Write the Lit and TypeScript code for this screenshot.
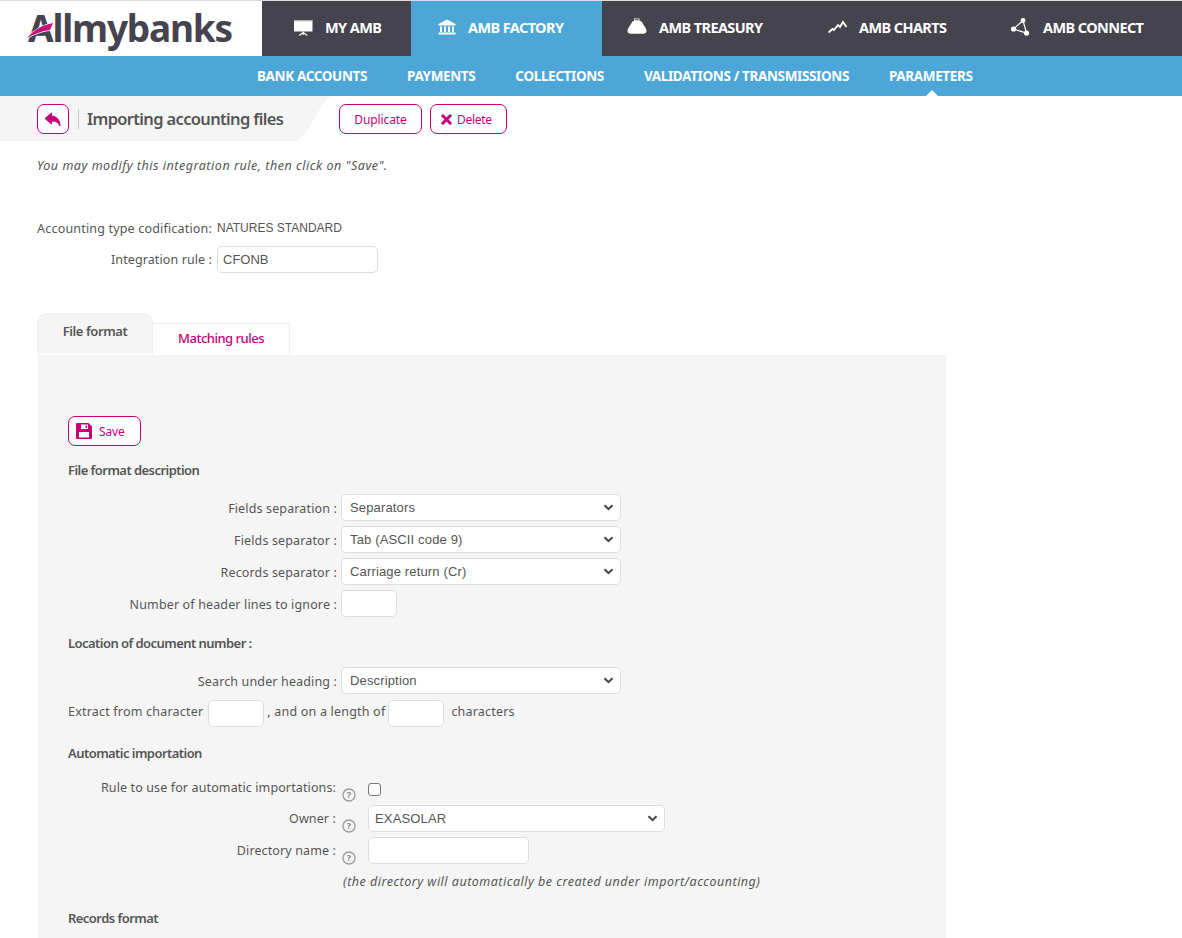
import { LitElement, html, css, svg } from "lit";
import { customElement } from "lit/decorators.js";

const selectCtl = (w: string, text: string) => html`<span class="selw ${w}"><select class="sel"><option>${text}</option></select><svg class="chev" width="11" height="7" viewBox="0 0 11 7"><path d="M1.500 1.200 5.500 5.200l4-4" fill="none" stroke="#444" stroke-width="2"/></svg></span>`;
const help = () => html`<svg class="help" width="14" height="14" viewBox="0 0 14 14"><circle cx="7" cy="7" r="6" fill="none" stroke="#999" stroke-width="1.300"/><text x="7" y="10.2" text-anchor="middle" font-size="9" font-weight="700" font-family="Noto Sans" fill="#888">?</text></svg>`;

const icons = {
  monitor: svg`<path d="M0 3.500h18.500v11H0z" fill="#fff"/><path d="M0 3.500h18.500v1H0z" fill="#cfc8b8"/><path d="M9.200 14.500v3.500M9.200 15.500l-4 3M9.200 15.500l4 3" stroke="#fff" stroke-width="1.100" fill="none"/>`,
  bank: svg`<path d="M9 2.500 .5 7v1.500h17V7z M2 9.500h2v5.500H2z M6 9.500h2v5.500H6z M10 9.500h2v5.500h-2z M14 9.500h2v5.500h-2z M.5 15.500h17v2H.5z" fill="#fff"/>`,
  purse: svg`<path d="M7 1.500h5.500V4H7z M7.800 2.300v1h3.900v-1z" fill="#fff" fill-rule="evenodd"/><path d="M6.500 4h7c1 0 1.500 1.200 2.500 3 1.500 2.500 3.500 4.500 3.500 7 0 1.800-1.500 2.700-3 2.700H3.500C2 16.700.5 15.800.5 14c0-2.500 2-4.500 3.500-7 1-1.800 1.500-3 2.500-3z" fill="#fff"/>`,
  chart: svg`<path d="M1.500 15.500 5.500 12l1.500 1 4-5 2 2 3-5 3.500 5" fill="none" stroke="#fff" stroke-width="1.800"/>`,
  connect: svg`<path d="M13.500 3.500 4 12l13 4z" fill="none" stroke="#fff" stroke-width="1.200"/><circle cx="13.500" cy="3.500" r="2.400" fill="#fff"/><circle cx="4" cy="12" r="2.600" fill="#fff"/><circle cx="17" cy="16" r="2.600" fill="#fff"/>`,
};

@customElement("app-root")
export class AppRoot extends LitElement {
  static styles = css`
    :host { display: block; width: 1182px; height: 938px; overflow: hidden; background: #fff; font-family: "Noto Sans", sans-serif; font-size: 12.5px; color: #555; }
    * { box-sizing: border-box; }
    .top { display: flex; height: 56px; border-top: 1px solid #ddd; background: #45434e; }
    .logo { width: 262px; background: #fff; position: relative; display: flex; align-items: center; padding: 0 0 2px 28px; font: 700 37px/1 "Noto Sans", sans-serif; letter-spacing: -1.2px; color: #45434e; }
    .swoosh { position: absolute; left: 26px; top: 14px; }
    .nav { display: flex; align-items: center; padding-bottom: 3px; color: #fff; font-weight: 700; font-size: 14.5px; letter-spacing: -0.6px; white-space: nowrap; }
    .nav svg { margin-right: 11px; flex: none; }
    .n1 { width: 149px; padding-left: 32px; }
    .n2 { width: 191px; padding-left: 27px; background: #4da6d8; }
    .n2 svg { margin-right: 10px; }
    .n3 { width: 191px; padding-left: 25px; }
    .n3 svg { margin-right: 12px; }
    .n4 { width: 184px; padding-left: 34px; }
    .n4 svg { margin-right: 12px; }
    .n5 { flex: 1; padding-left: 32px; }
    .n5 svg { margin-right: 13px; }
    .sub { height: 40px; background: #4da6d8; display: flex; gap: 40px; padding-left: 257px; align-items: center; color: #fff; font-weight: 700; font-size: 13.5px; letter-spacing: -0.36px; position: relative; white-space: nowrap; }
    .caret { position: absolute; left: 926px; bottom: 0; width: 0; height: 0; border: 6px solid transparent; border-top: 0; border-bottom: 6px solid #fff; }
    .crumbs { height: 45px; display: flex; align-items: flex-start; position: relative; }
    .crumb-bg { position: absolute; left: 0; top: 0; }
    .crumb-row { position: relative; display: flex; align-items: center; padding: 8px 0 0 37px; }
    .btn { height: 30px; border: 1px solid #c5007a; border-radius: 7px; background: #fff; color: #c5007a; display: inline-flex; align-items: center; justify-content: center; font-size: 12px; letter-spacing: -0.1px; }
    .back { width: 32px; }
    .vr { width: 1px; height: 20px; background: #ccc; margin: 0 8px 0 9px; }
    .title { width: 252px; padding-bottom: 2px; font-size: 16.5px; font-weight: 600; letter-spacing: -0.66px; color: #555; }
    .dup { width: 83px; margin-right: 8px; }
    .del { width: 77px; gap: 5px; justify-content: flex-start; padding-left: 10px; letter-spacing: -0.3px; }
    .note { margin: 16px 0 0 37px; font-style: italic; font-size: 12.5px; letter-spacing: 0.53px; line-height: 17px; }
    .row1 { display: flex; margin-top: 47px; padding-left: 37px; line-height: 16px; align-items: center; }
    .row1 .l { width: 175px; text-align: right; letter-spacing: 0.18px; white-space: nowrap; }
    .row1 .v { margin-left: 5px; font: 12px "Liberation Sans", sans-serif; color: #555; margin-top: -2px; }
    .row2 { display: flex; margin-top: 9px; padding-left: 37px; align-items: center; }
    .row2 .l { width: 175px; text-align: right; letter-spacing: 0.1px; }
    .row2 .inp { margin-left: 5px; width: 161px; color: #555; padding-left: 5px; }
    .inp { height: 27px; border: 1px solid #ddd; border-radius: 5px; background: #fff; font: 13px "Liberation Sans", sans-serif; display: block; }
    .tabs { display: flex; align-items: flex-end; margin: 40px 0 0 37px; height: 41px; }
    .tab-a { width: 116px; height: 41px; background: #f5f5f5; border: 1px solid #eee; border-bottom: 0; border-radius: 10px 10px 0 0; font-weight: 600; font-size: 13px; letter-spacing: -0.42px; text-align: center; padding-top: 8px; color: #555; }
    .tab-b { width: 137px; height: 31px; border: 1px solid #eee; border-left: 0; border-bottom: 0; color: #c5007a; font-size: 13px; font-weight: 500; letter-spacing: -0.5px; text-align: center; padding-top: 5px; }
    .panel { margin: 1px 0 0 38px; width: 908px; height: 600px; background: #f5f5f5; padding: 61px 0 0 30px; }
    .save { width: 73px; gap: 7px; justify-content: flex-start; padding-left: 7px; }
    h3 { margin: 0; font-size: 13px; font-weight: 600; letter-spacing: -0.55px; line-height: 18px; color: #555; }
    .h1 { margin-top: 15px; }
    .rows { display: grid; grid-template-columns: 269px auto; justify-content: start; row-gap: 5px; align-items: center; column-gap: 4px; }
    .rows .l { padding-top: 2px; text-align: right; letter-spacing: 0.14px; white-space: nowrap; }
    .r-a { margin-top: 15px; }
    .h2 { margin-top: 17px; }
    .r-b { margin-top: 15px; }
    .selw { position: relative; display: block; }
    .chev { position: absolute; right: 7px; top: 10px; pointer-events: none; }
    .sel { appearance: none; width: 100%; height: 27px; border: 1px solid #ddd; border-radius: 5px; background: #fff; color: #555; font: 13px "Liberation Sans", sans-serif; letter-spacing: 0.15px; padding: 0 8px; display: block; }
    .w280 { width: 280px; }
    .w297 { width: 297px; }
    .w297 .sel { padding: 0 6px; }
    .small { width: 56px; }
    .mid { width: 161px; }
    .extract { display: flex; align-items: flex-start; line-height: 24px; margin-top: 6px; letter-spacing: 0.2px; white-space: nowrap; }
    .extract .inp { margin: 0 3px 0 3px; }
    .extract .inp:first-of-type { margin-left: 5px; }
    .extract .end { margin-left: 4px; }
    .h3 { margin-top: 17px; }
    .auto { display: grid; grid-template-columns: 268px 32px auto; justify-content: start; row-gap: 5px; align-items: center; margin-top: 12px; }
    .auto .l { text-align: right; letter-spacing: 0.12px; white-space: nowrap; align-self: start; padding-top: 7px; line-height: 16px; margin-top: -1px; }
    .auto .c { align-self: start; line-height: 16px; }
    .help { display: block; margin: 14px 0 -2px 6px; }
    .check { appearance: none; display: block; align-self: start; margin: 9px 0 0; width: 13px; height: 13px; border: 1.500px solid #777; border-radius: 3px; background: #fff; }
    .hint { margin: 9px 0 0 275px; font-style: italic; font-size: 12.5px; line-height: 17px; letter-spacing: 0.5px; white-space: nowrap; }
    .h4 { margin-top: 19px; }
  `;

  render() {
    return html`
      <div class="top">
        <div class="logo">Allmybanks
          <svg class="swoosh" width="28" height="26" viewBox="0 0 28 26"><path d="M1 23C8 15 16 10 27 8l-3 7C16 16 8 19 1 23z" fill="#c5107a" stroke="#fff" stroke-width="1.500" paint-order="stroke"/></svg>
        </div>
        <div class="nav n1"><svg width="20" height="20" viewBox="0 0 20 20">${icons.monitor}</svg>MY AMB</div>
        <div class="nav n2"><svg width="20" height="20" viewBox="0 0 20 20">${icons.bank}</svg>AMB FACTORY</div>
        <div class="nav n3"><svg width="20" height="20" viewBox="0 0 20 20">${icons.purse}</svg>AMB TREASURY</div>
        <div class="nav n4"><svg width="20" height="20" viewBox="0 0 20 20">${icons.chart}</svg>AMB CHARTS</div>
        <div class="nav n5"><svg width="21" height="20" viewBox="0 0 20 20">${icons.connect}</svg>AMB CONNECT</div>
      </div>
      <div class="sub">
        <span>BANK ACCOUNTS</span><span>PAYMENTS</span><span>COLLECTIONS</span><span>VALIDATIONS / TRANSMISSIONS</span><span>PARAMETERS</span>
        <i class="caret"></i>
      </div>
      <div class="crumbs">
        <svg class="crumb-bg" width="332" height="45" viewBox="0 0 332 45"><path d="M0 0H331C318 8 312 36 296 45H0z" fill="#f5f5f5"/></svg>
        <div class="crumb-row">
          <span class="btn back"><svg width="18" height="15" viewBox="0 0 18 15"><path d="M7.500 1 1 6.500l6.500 5.500V9c4 0 6.500 1 8.500 5 0-6-3-9.500-8.500-10z" fill="#c5007a" stroke="#c5007a" stroke-linejoin="round"/></svg></span>
          <i class="vr"></i>
          <span class="title">Importing accounting files</span>
          <span class="btn dup">Duplicate</span>
          <span class="btn del"><svg width="11" height="11" viewBox="0 0 11 11"><path d="M1.800 1.800l7.400 7.400M9.200 1.800l-7.400 7.400" stroke="#c5007a" stroke-width="3" stroke-linecap="round"/></svg>Delete</span>
        </div>
      </div>
      <div class="note">You may modify this integration rule, then click on "Save".</div>
      <div class="row1"><span class="l">Accounting type codification:</span><span class="v">NATURES STANDARD</span></div>
      <div class="row2"><span class="l">Integration rule :</span><input class="inp" value="CFONB" /></div>
      <div class="tabs"><div class="tab-a">File format</div><div class="tab-b">Matching rules</div></div>
      <div class="panel">
        <span class="btn save"><svg width="16" height="16" viewBox="0 0 16 16"><path fill-rule="evenodd" fill="#c5007a" d="M1 0H12.500L16 3.500V15a1 1 0 0 1-1 1H1a1 1 0 0 1-1-1V1a1 1 0 0 1 1-1zM5 1.500V6h7V1.500zM3 9v5.500h10V9zM9.500 2.500h1.500v2.500H9.500z"/></svg>Save</span>
        <h3 class="h1">File format description</h3>
        <div class="rows r-a">
          <span class="l">Fields separation :</span>${selectCtl("w280", "Separators")}
          <span class="l">Fields separator :</span>${selectCtl("w280", "Tab (ASCII code 9)")}
          <span class="l">Records separator :</span>${selectCtl("w280", "Carriage return (Cr)")}
          <span class="l">Number of header lines to ignore :</span><input class="inp small" />
        </div>
        <h3 class="h2">Location of document number :</h3>
        <div class="rows r-b">
          <span class="l">Search under heading :</span>${selectCtl("w280", "Description")}
        </div>
        <div class="extract">Extract from character<input class="inp small" />, and on a length of<input class="inp small" /><span class="end">characters</span></div>
        <h3 class="h3">Automatic importation</h3>
        <div class="auto">
          <span class="l">Rule to use for automatic importations:</span><span class="c">${help()}</span><input class="check" type="checkbox" />
          <span class="l">Owner :</span><span class="c">${help()}</span>${selectCtl("w297", "EXASOLAR")}
          <span class="l">Directory name :</span><span class="c">${help()}</span><input class="inp mid" />
        </div>
        <div class="hint">(the directory will automatically be created under import/accounting)</div>
        <h3 class="h4">Records format</h3>
      </div>
    `;
  }
}
